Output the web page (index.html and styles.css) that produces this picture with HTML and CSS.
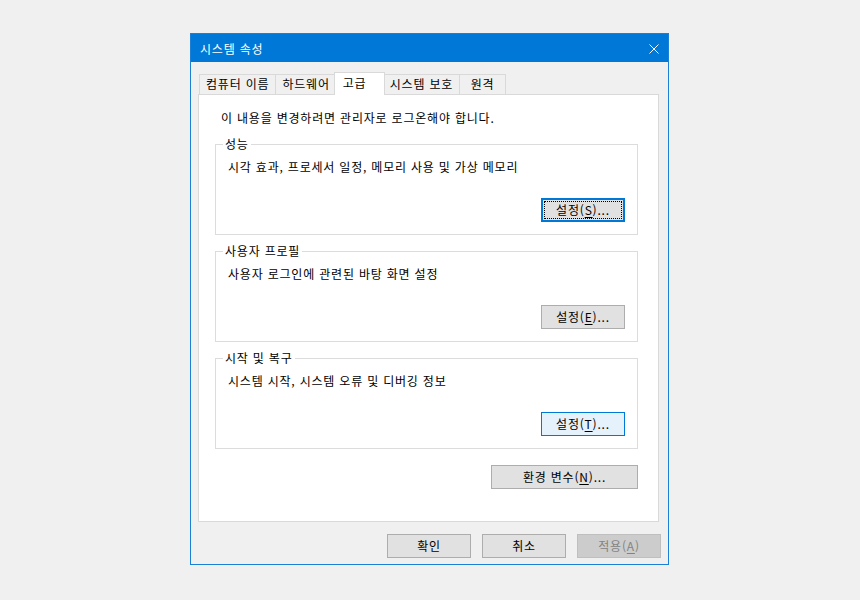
FILE: index.html
```html
<!DOCTYPE html>
<html lang="ko">
<head>
    <meta charset="UTF-8">
    <title>시스템 속성</title>
    <link rel="stylesheet" href="styles.css">
</head>
<body>
    <div class="window">
        <div class="titlebar">
            <span class="title">시스템 속성</span>
            <svg class="close" width="10" height="10" viewBox="0 0 10 10">
                <path d="M0.5 0.5 L9.5 9.5 M9.5 0.5 L0.5 9.5" stroke="#fff" stroke-width="1" fill="none"/>
            </svg>
        </div>
        <div class="content">
            <div class="tabs">
                <div class="tab">컴퓨터 이름</div>
                <div class="tab">하드웨어</div>
                <div class="tab active">고급</div>
                <div class="tab">시스템 보호</div>
                <div class="tab">원격</div>
            </div>
            <div class="panel">
                <p class="note">이 내용을 변경하려면 관리자로 로그온해야 합니다.</p>

                <fieldset class="group">
                    <legend>성능</legend>
                    <p class="desc">시각 효과, 프로세서 일정, 메모리 사용 및 가상 메모리</p>
                    <div class="actions"><button class="btn focused">설정(<u>S</u>)...</button></div>
                </fieldset>

                <fieldset class="group">
                    <legend>사용자 프로필</legend>
                    <p class="desc">사용자 로그인에 관련된 바탕 화면 설정</p>
                    <div class="actions"><button class="btn">설정(<u>E</u>)...</button></div>
                </fieldset>

                <fieldset class="group">
                    <legend>시작 및 복구</legend>
                    <p class="desc">시스템 시작, 시스템 오류 및 디버깅 정보</p>
                    <div class="actions"><button class="btn hover">설정(<u>T</u>)...</button></div>
                </fieldset>

                <div class="actions env"><button class="btn wide">환경 변수(<u>N</u>)...</button></div>
            </div>
        </div>
        <div class="footer">
            <button class="btn">확인</button>
            <button class="btn">취소</button>
            <button class="btn disabled">적용(<u>A</u>)</button>
        </div>
    </div>
</body>
</html>
```

FILE: styles.css
```css
* {
    margin: 0;
    padding: 0;
    box-sizing: border-box;
}
body {
    background-color: #f0f0f0;
    font-family: "Noto Sans CJK KR", "Noto Sans", sans-serif;
    font-size: 12px;
    letter-spacing: 0.8px;
    color: #000;
    padding: 33px 0 0 190px;
}
.window {
    width: 479px;
    height: 532px;
    border: 1px solid #1a7fd5;
    background-color: #f0f0f0;
}
.titlebar {
    height: 28px;
    background-color: #0078d7;
    color: #fff;
    display: flex;
    align-items: center;
    justify-content: space-between;
    padding: 0 9px 0 9px;
}
.title {
    line-height: 16px;
    padding-top: 1px;
}
.close {
    margin-top: 2px;
}
.content {
    padding: 10px 9px 0 7px;
}
.tabs {
    display: flex;
    align-items: flex-start;
    height: 22px;
    padding-left: 1px;
}
.tab {
    height: 20px;
    margin-top: 2px;
    min-width: 47px;
    padding: 0 6px;
    line-height: 18px;
    text-align: center;
    border: 1px solid #d9d9d9;
    border-bottom: none;
    margin-right: -1px;
    background-color: #f0f0f0;
}
.tab.active {
    height: 23px;
    margin: 0 -1px 0 -2px;
    padding: 0 8px;
    min-width: 51px;
    line-height: 20px;
    text-align: left;
    background-color: #fff;
    position: relative;
    z-index: 1;
}
.tab.active + .tab {
    margin-left: -1px;
}
.panel {
    height: 428px;
    border: 1px solid #d9d9d9;
    background-color: #fff;
    padding: 15px 20px 0 16px;
}
.note {
    line-height: 16px;
    padding-left: 6px;
    margin-bottom: 10px;
}
.group {
    border: 1px solid #dcdcdc;
    padding: 0 12px 12px 12px;
    margin: 0 0 8px 0;
    min-inline-size: 0;
}
.group legend {
    line-height: 16px;
    padding: 0 2px;
    margin-left: -5px;
}
.desc {
    line-height: 16px;
    margin-top: 7px;
}
.actions {
    display: flex;
    justify-content: flex-end;
    margin-top: 23px;
}
.actions.env {
    margin-top: 16px;
}
.btn {
    width: 84px;
    height: 24px;
    font-family: inherit;
    font-size: 12px;
    letter-spacing: 0.8px;
    color: #000;
    background-color: #e1e1e1;
    border: 1px solid #adadad;
    line-height: 20px;
}
.btn u {
    text-underline-offset: 2px;
}
.btn.focused {
    border: 2px solid #0078d7;
    outline: 1px dotted #000;
    outline-offset: -4px;
}
.btn.hover {
    background-color: #e5f1fb;
    border-color: #0078d7;
}
.btn.wide {
    width: 147px;
}
.btn.disabled {
    background-color: #cccccc;
    border-color: #bfbfbf;
    color: #838383;
}
.footer {
    display: flex;
    justify-content: flex-end;
    gap: 11px;
    padding: 12px 7px 0 0;
}
```
